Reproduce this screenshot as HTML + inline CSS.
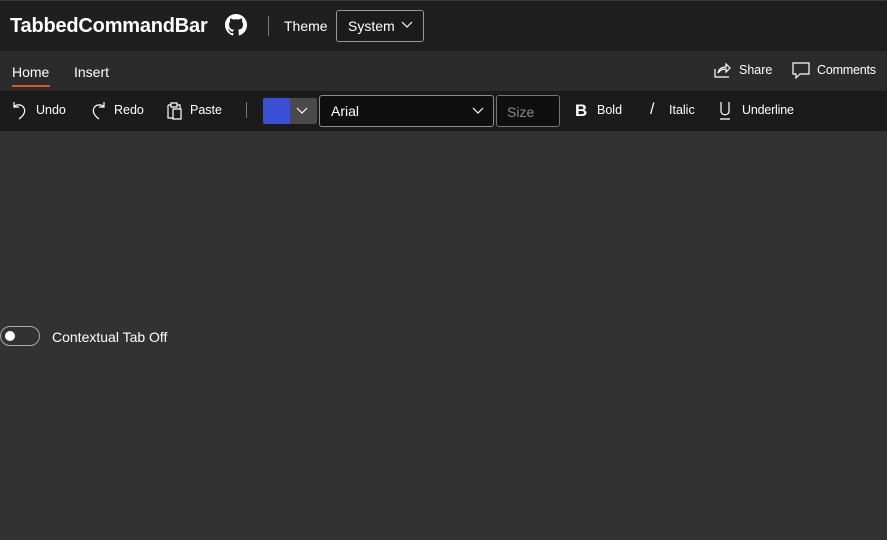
<!DOCTYPE html>
<html><head><style>
*{box-sizing:border-box;margin:0;padding:0}
body{width:887px;height:540px;background:#323232;font-family:"Segoe UI","Liberation Sans",sans-serif;color:#fff;position:relative;overflow:hidden;font-size:12.5px}
.a{position:absolute}
svg{position:absolute;fill:none;stroke:#fff;stroke-width:1.2}
</style></head><body>
<div class="a" style="left:0;top:0;width:887px;height:51px;background:#1f1f1f;border-top:1px solid #3a3a3a"></div>
<div class="a" style="left:10px;top:15px;font-size:20px;font-weight:bold;letter-spacing:-0.2px">TabbedCommandBar</div>
<svg style="left:225px;top:14px" width="22" height="22" viewBox="0 0 16 16"><path fill="#fff" stroke="none" d="M8 0C3.58 0 0 3.58 0 8c0 3.54 2.290 6.53 5.47 7.59.4.07.55-.17.55-.38 0-.19-.01-.82-.01-1.49-2.010.37-2.530-.49-2.690-.94-.09-.23-.48-.94-.82-1.130-.28-.15-.68-.52-.01-.53.63-.01 1.080.58 1.230.82.72 1.210 1.870.87 2.330.66.07-.52.28-.87.51-1.070-1.780-.2-3.640-.89-3.640-3.950 0-.87.31-1.590.82-2.150-.08-.2-.36-1.020.08-2.120 0 0 .67-.21 2.2.82.64-.18 1.320-.27 2-.27.68 0 1.360.09 2 .27 1.530-1.040 2.2-.82 2.2-.82.44 1.1.16 1.920.08 2.120.51.56.82 1.270.82 2.150 0 3.070-1.870 3.750-3.650 3.950.29.25.54.73.54 1.480 0 1.070-.01 1.930-.01 2.2 0 .21.15.46.55.38A8.013 8.013 0 0016 8c0-4.420-3.580-8-8-8z"/></svg>
<div class="a" style="left:268px;top:16px;width:1px;height:20px;background:#777"></div>
<div class="a" style="left:284px;top:18px;font-size:14px">Theme</div>
<div class="a" style="left:336px;top:10px;width:88px;height:32px;border:1px solid #999;border-radius:3px;background:#1b1b1b"></div>
<div class="a" style="left:348px;top:18px;font-size:14px">System</div>
<svg style="left:401px;top:21px" width="12" height="8"><path d="M1 1l5 5 5-5"/></svg>

<div class="a" style="left:0;top:51px;width:887px;height:40px;background:#2b2b2b"></div>
<div class="a" style="left:12px;top:64px;font-size:14px">Home</div>
<div class="a" style="left:12px;top:85px;width:38px;height:2px;background:#d9582a"></div>
<div class="a" style="left:74px;top:64px;font-size:14px">Insert</div>
<svg style="left:714px;top:62px" width="18" height="16"><path d="M1 7v8h14M4 11c1-4 4-6 8-6V2l4 4-4 4V7c-3 0-6 1-8 4z"/></svg>
<div class="a" style="left:739px;top:63px">Share</div>
<svg style="left:792px;top:62px" width="18" height="17"><path d="M1 1h16v11H8l-4 4v-4H1z"/></svg>
<div class="a" style="left:817px;top:63px;letter-spacing:-0.2px">Comments</div>

<div class="a" style="left:0;top:91px;width:887px;height:40px;background:#1b1b1b"></div>
<svg style="left:12px;top:101px" width="16" height="19"><path d="M2 1v5h5M2 6c2-3 8-3 10 1 2 4-1 8-5 11"/></svg>
<div class="a" style="left:36px;top:103px">Undo</div>
<svg style="left:90px;top:101px" width="16" height="19"><path d="M14 1v5H9M14 6c-2-3-8-3-10 1-2 4 1 8 5 11"/></svg>
<div class="a" style="left:114px;top:103px">Redo</div>
<svg style="left:166px;top:101px" width="16" height="19"><path d="M2 4h3M11 4h3v4M2 4v13h5M5 2h6v4H5zM7 8h8v10H7z"/></svg>
<div class="a" style="left:190px;top:103px">Paste</div>
<div class="a" style="left:246px;top:102px;width:1px;height:16px;background:#777"></div>
<div class="a" style="left:263px;top:98px;width:54px;height:26px;background:#4a4a4a;border-radius:2px"></div>
<div class="a" style="left:263px;top:98px;width:27px;height:26px;background:#3a50d4;border-radius:2px 0 0 2px"></div>
<svg style="left:296px;top:107px" width="12" height="8"><path d="M1 1l5 5 5-5"/></svg>
<div class="a" style="left:319px;top:95px;width:175px;height:32px;border:1px solid #8a8a8a;border-radius:3px;background:#0f0f0f"></div>
<div class="a" style="left:331px;top:103px;font-size:14px">Arial</div>
<svg style="left:472px;top:107px" width="12" height="8"><path d="M1 1l5 5 5-5"/></svg>
<div class="a" style="left:496px;top:95px;width:64px;height:32px;border:1px solid #777;border-radius:3px;background:#0f0f0f"></div>
<div class="a" style="left:507px;top:104px;font-size:14px;color:#888">Size</div>
<div class="a" style="left:575px;top:101px;font-size:17px;font-weight:bold">B</div>
<div class="a" style="left:597px;top:103px">Bold</div>
<div class="a" style="left:650px;top:101px;font-size:16px">/</div>
<div class="a" style="left:669px;top:103px">Italic</div>
<svg style="left:719px;top:101px" width="14" height="19"><path d="M2 1v9c0 5 8 5 8 0V1M1 18h10"/></svg>
<div class="a" style="left:742px;top:103px;letter-spacing:-0.2px">Underline</div>

<div class="a" style="left:0;top:326px;width:40px;height:20px;border:1px solid #aaa;border-radius:10px"></div>
<div class="a" style="left:5px;top:331px;width:10px;height:10px;border-radius:50%;background:#fff"></div>
<div class="a" style="left:52px;top:329px;font-size:14px">Contextual Tab Off</div>
</body></html>
